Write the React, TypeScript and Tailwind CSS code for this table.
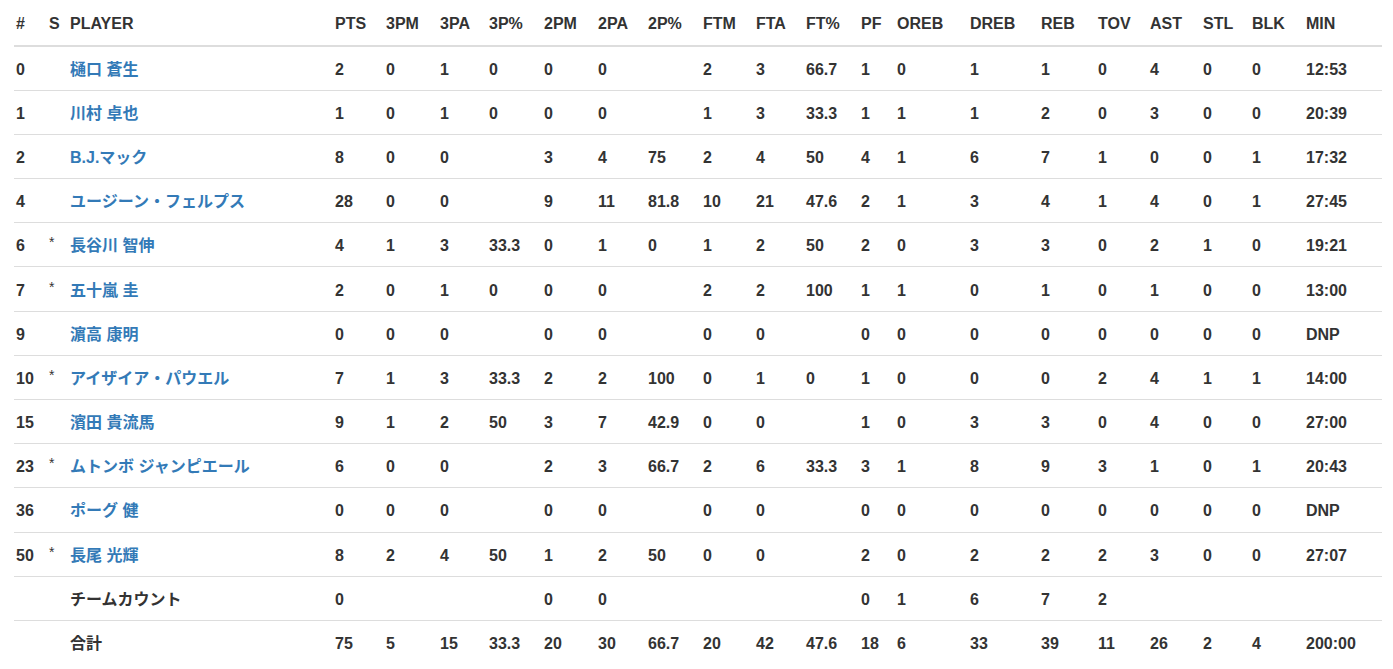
const cols = [
  { key: 'no', label: '#', w: 33 },
  { key: 's', label: 'S', w: 21 },
  { key: 'name', label: 'PLAYER', w: 265 },
  { key: 'pts', label: 'PTS', w: 51 },
  { key: 'tpm', label: '3PM', w: 54 },
  { key: 'tpa', label: '3PA', w: 49 },
  { key: 'tpp', label: '3P%', w: 55 },
  { key: 'dpm', label: '2PM', w: 54 },
  { key: 'dpa', label: '2PA', w: 50 },
  { key: 'dpp', label: '2P%', w: 55 },
  { key: 'ftm', label: 'FTM', w: 53 },
  { key: 'fta', label: 'FTA', w: 50 },
  { key: 'ftp', label: 'FT%', w: 55 },
  { key: 'pf', label: 'PF', w: 36 },
  { key: 'oreb', label: 'OREB', w: 73 },
  { key: 'dreb', label: 'DREB', w: 71 },
  { key: 'reb', label: 'REB', w: 57 },
  { key: 'tov', label: 'TOV', w: 52 },
  { key: 'ast', label: 'AST', w: 53 },
  { key: 'stl', label: 'STL', w: 49 },
  { key: 'blk', label: 'BLK', w: 54 },
  { key: 'min', label: 'MIN', w: 78 },
];

// no, s, name, then stats in column order
const players: (string | number)[][] = [
  ['0', '', '樋口 蒼生', 2, 0, 1, 0, 0, 0, '', 2, 3, 66.7, 1, 0, 1, 1, 0, 4, 0, 0, '12:53'],
  ['1', '', '川村 卓也', 1, 0, 1, 0, 0, 0, '', 1, 3, 33.3, 1, 1, 1, 2, 0, 3, 0, 0, '20:39'],
  ['2', '', 'B.J.マック', 8, 0, 0, '', 3, 4, 75, 2, 4, 50, 4, 1, 6, 7, 1, 0, 0, 1, '17:32'],
  ['4', '', 'ユージーン・フェルプス', 28, 0, 0, '', 9, 11, 81.8, 10, 21, 47.6, 2, 1, 3, 4, 1, 4, 0, 1, '27:45'],
  ['6', '*', '長谷川 智伸', 4, 1, 3, 33.3, 0, 1, 0, 1, 2, 50, 2, 0, 3, 3, 0, 2, 1, 0, '19:21'],
  ['7', '*', '五十嵐 圭', 2, 0, 1, 0, 0, 0, '', 2, 2, 100, 1, 1, 0, 1, 0, 1, 0, 0, '13:00'],
  ['9', '', '濵高 康明', 0, 0, 0, '', 0, 0, '', 0, 0, '', 0, 0, 0, 0, 0, 0, 0, 0, 'DNP'],
  ['10', '*', 'アイザイア・パウエル', 7, 1, 3, 33.3, 2, 2, 100, 0, 1, 0, 1, 0, 0, 0, 2, 4, 1, 1, '14:00'],
  ['15', '', '濱田 貴流馬', 9, 1, 2, 50, 3, 7, 42.9, 0, 0, '', 1, 0, 3, 3, 0, 4, 0, 0, '27:00'],
  ['23', '*', 'ムトンボ ジャンピエール', 6, 0, 0, '', 2, 3, 66.7, 2, 6, 33.3, 3, 1, 8, 9, 3, 1, 0, 1, '20:43'],
  ['36', '', 'ポーグ 健', 0, 0, 0, '', 0, 0, '', 0, 0, '', 0, 0, 0, 0, 0, 0, 0, 0, 'DNP'],
  ['50', '*', '長尾 光輝', 8, 2, 4, 50, 1, 2, 50, 0, 0, '', 2, 0, 2, 2, 2, 3, 0, 0, '27:07'],
];

const team: (string | number)[] = ['', '', 'チームカウント', 0, '', '', '', 0, 0, '', '', '', '', 0, 1, 6, 7, 2, '', '', '', ''];
const total: (string | number)[] = ['', '', '合計', 75, 5, 15, 33.3, 20, 30, 66.7, 20, 42, 47.6, 18, 6, 33, 39, 11, 26, 2, 4, '200:00'];

function Row({ cells, link }: { cells: (string | number)[]; link: boolean }) {
  return (
    <tr>
      {cells.map((c, i) => (
        <td key={i} className="h-[44.2px] border-t border-[#ddd] pt-[3px] pl-[2px] align-middle">
          {i === 1 ? (
            <span className="relative top-[-4px] text-[14px] font-normal">{c}</span>
          ) : i === 2 && link ? (
            <a className="text-[#337ab7]">{c}</a>
          ) : (
            c
          )}
        </td>
      ))}
    </tr>
  );
}

export default function App() {
  return (
    <div className="min-h-screen bg-white pl-[14px] font-['Liberation_Sans','Noto_Sans_CJK_JP',sans-serif] text-[16px] font-bold text-[#333]">
      <table className="w-[1368px] table-fixed border-collapse text-left leading-[20px]">
        <colgroup>
          {cols.map((c) => (
            <col key={c.key} style={{ width: c.w }} />
          ))}
        </colgroup>
        <thead>
          <tr>
            {cols.map((c) => (
              <th key={c.key} className="h-[46px] border-b-2 border-[#ddd] pt-[3px] pl-[2px] align-middle">
                {c.label}
              </th>
            ))}
          </tr>
        </thead>
        <tbody>
          {players.map((p) => (
            <Row key={p[0] as string} cells={p} link />
          ))}
          <Row cells={team} link={false} />
          <Row cells={total} link={false} />
        </tbody>
      </table>
    </div>
  );
}
